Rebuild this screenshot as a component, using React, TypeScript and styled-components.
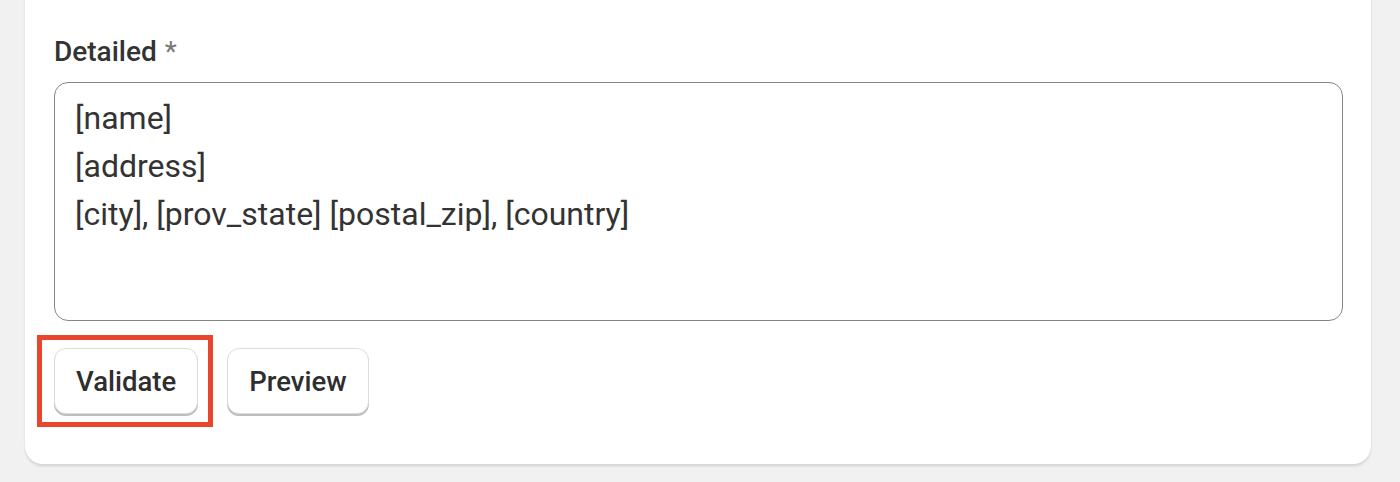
import React from "react";
import styled, { createGlobalStyle } from "styled-components";

const GlobalStyle = createGlobalStyle`
  html, body {
    margin: 0;
    padding: 0;
    background: #f1f1f1;
    font-family: Roboto, "Liberation Sans", sans-serif;
  }
`;

const Page = styled.div`
  padding: 0 29px 0 25px;
  height: 482px;
  overflow: hidden;
  box-sizing: border-box;
`;

const Card = styled.section`
  margin-top: -30px;
  background: #ffffff;
  border-radius: 18px;
  box-shadow: 0 3px 2px rgba(0, 0, 0, 0.07), 0 1px 3px rgba(0, 0, 0, 0.06);
  padding: 65px 28px 50px 29px;
  display: flex;
  flex-direction: column;
`;

const Label = styled.label`
  font-size: 28px;
  line-height: 34px;
  font-weight: 500;
  color: #333333;
  margin-bottom: 13px;
`;

const Required = styled.span`
  color: #777777;
  font-weight: 400;
  margin-left: 8px;
`;

const TextArea = styled.textarea`
  display: block;
  box-sizing: border-box;
  width: 100%;
  height: 239px;
  border: 1px solid #858585;
  border-radius: 14px;
  padding: 11px 20px 8px;
  font-family: Roboto, "Liberation Sans", sans-serif;
  font-size: 32px;
  line-height: 48px;
  color: #333333;
  resize: none;
  outline: none;
  overflow: hidden;
  background: #ffffff;
`;

const Actions = styled.div`
  display: flex;
  gap: 29px;
  margin-top: 27px;
`;

const ButtonWrap = styled.div`
  position: relative;
  display: flex;
`;

const Highlight = styled.div`
  position: absolute;
  top: -13px;
  left: -17px;
  right: -15px;
  bottom: -13px;
  border: 5px solid #e8452c;
  pointer-events: none;
`;

const Button = styled.button`
  height: 66px;
  box-sizing: border-box;
  padding: 0 21px;
  border: 1px solid #dcdcdc;
  border-radius: 12px;
  background: #ffffff;
  box-shadow: 0 2px 0 #bdbdbd;
  font-family: Roboto, "Liberation Sans", sans-serif;
  font-size: 27.5px;
  font-weight: 500;
  color: #2e2e2e;
  cursor: pointer;
`;

const value = "[name]\n[address]\n[city], [prov_state] [postal_zip], [country]";

export default function App() {
  return (
    <>
      <GlobalStyle />
      <Page>
        <Card>
          <Label htmlFor="detailed">
            Detailed<Required>*</Required>
          </Label>
          <TextArea id="detailed" readOnly value={value} spellCheck={false} />
          <Actions>
            <ButtonWrap>
              <Button>Validate</Button>
              <Highlight />
            </ButtonWrap>
            <ButtonWrap>
              <Button>Preview</Button>
            </ButtonWrap>
          </Actions>
        </Card>
      </Page>
    </>
  );
}
